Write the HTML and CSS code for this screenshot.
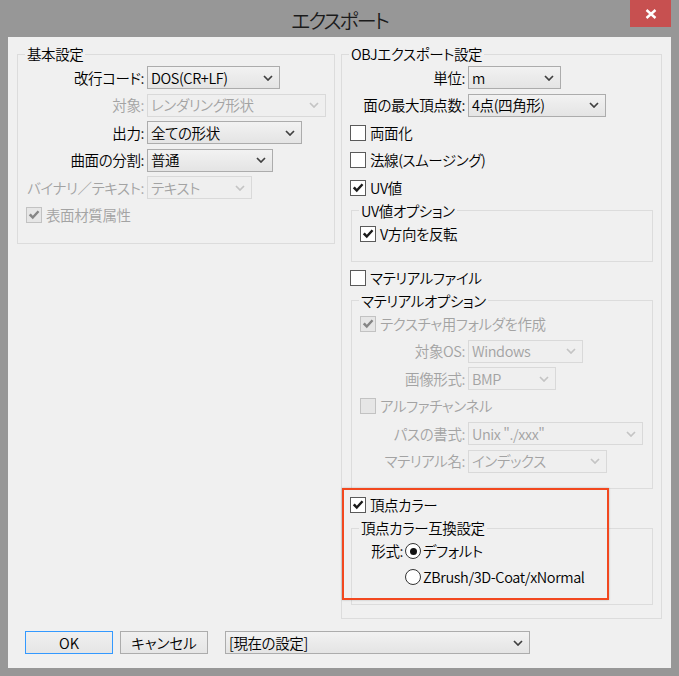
FILE: index.html
```html
<!DOCTYPE html>
<html lang="ja">
<head>
    <meta charset="UTF-8">
    <meta name="viewport" content="width=device-width, initial-scale=1.0">
    <title>エクスポート</title>
    <link rel="stylesheet" href="styles.css">
</head>
<body>
    <div class="window">
        <div class="titlebar">
            <div class="title">エクスポート</div>
            <button class="close-btn" type="button">
                <svg width="12" height="10" viewBox="0 0 12 10"><path d="M1.5 1l9 8M10.5 1l-9 8"/></svg>
            </button>
        </div>

        <div class="client">
            <div class="panes">
                <!-- 基本設定 -->
                <fieldset class="group basic">
                    <legend>基本設定</legend>
                    <div class="group-body">
                        <div class="field">
                            <span class="field-label">改行コード:</span>
                            <div class="combo w-133"><span>DOS(CR+LF)</span><svg class="chev" viewBox="0 0 10 6"><path d="M1 1l4 4 4-4"/></svg></div>
                        </div>
                        <div class="field disabled">
                            <span class="field-label">対象:</span>
                            <div class="combo w-179"><span>レンダリング形状</span><svg class="chev" viewBox="0 0 10 6"><path d="M1 1l4 4 4-4"/></svg></div>
                        </div>
                        <div class="field">
                            <span class="field-label">出力:</span>
                            <div class="combo w-155"><span>全ての形状</span><svg class="chev" viewBox="0 0 10 6"><path d="M1 1l4 4 4-4"/></svg></div>
                        </div>
                        <div class="field">
                            <span class="field-label">曲面の分割:</span>
                            <div class="combo w-126"><span>普通</span><svg class="chev" viewBox="0 0 10 6"><path d="M1 1l4 4 4-4"/></svg></div>
                        </div>
                        <div class="field disabled">
                            <span class="field-label">バイナリ／テキスト:</span>
                            <div class="combo w-105"><span>テキスト</span><svg class="chev" viewBox="0 0 10 6"><path d="M1 1l4 4 4-4"/></svg></div>
                        </div>
                        <div class="check checked disabled">
                            <span class="box"><svg viewBox="0 0 14 14"><path d="M1.8 7.2l2-1.6 2 2.2 4.8-5.4 1.8 1.5-6.6 7.4z"/></svg></span>表面材質属性
                        </div>
                    </div>
                </fieldset>

                <!-- OBJエクスポート設定 -->
                <fieldset class="group obj">
                    <legend>OBJエクスポート設定</legend>
                    <div class="group-body">
                        <div class="field">
                            <span class="field-label">単位:</span>
                            <div class="combo w-93"><span>m</span><svg class="chev" viewBox="0 0 10 6"><path d="M1 1l4 4 4-4"/></svg></div>
                        </div>
                        <div class="field">
                            <span class="field-label">面の最大頂点数:</span>
                            <div class="combo w-138"><span>4点(四角形)</span><svg class="chev" viewBox="0 0 10 6"><path d="M1 1l4 4 4-4"/></svg></div>
                        </div>
                        <div class="check"><span class="box"></span>両面化</div>
                        <div class="check"><span class="box"></span>法線(スムージング)</div>
                        <div class="check checked">
                            <span class="box"><svg viewBox="0 0 14 14"><path d="M1.8 7.2l2-1.6 2 2.2 4.8-5.4 1.8 1.5-6.6 7.4z"/></svg></span>UV値
                        </div>

                        <fieldset class="group subgroup">
                            <legend>UV値オプション</legend>
                            <div class="group-body">
                                <div class="check checked">
                                    <span class="box"><svg viewBox="0 0 14 14"><path d="M1.8 7.2l2-1.6 2 2.2 4.8-5.4 1.8 1.5-6.6 7.4z"/></svg></span>V方向を反転
                                </div>
                            </div>
                        </fieldset>

                        <div class="check"><span class="box"></span>マテリアルファイル</div>

                        <fieldset class="group subgroup">
                            <legend>マテリアルオプション</legend>
                            <div class="group-body">
                                <div class="check checked disabled">
                                    <span class="box"><svg viewBox="0 0 14 14"><path d="M1.8 7.2l2-1.6 2 2.2 4.8-5.4 1.8 1.5-6.6 7.4z"/></svg></span>テクスチャ用フォルダを作成
                                </div>
                                <div class="field disabled">
                                    <span class="field-label">対象OS:</span>
                                    <div class="combo w-115"><span>Windows</span><svg class="chev" viewBox="0 0 10 6"><path d="M1 1l4 4 4-4"/></svg></div>
                                </div>
                                <div class="field disabled">
                                    <span class="field-label">画像形式:</span>
                                    <div class="combo w-88"><span>BMP</span><svg class="chev" viewBox="0 0 10 6"><path d="M1 1l4 4 4-4"/></svg></div>
                                </div>
                                <div class="check disabled"><span class="box"></span>アルファチャンネル</div>
                                <div class="field disabled">
                                    <span class="field-label">パスの書式:</span>
                                    <div class="combo w-175"><span>Unix "./xxx"</span><svg class="chev" viewBox="0 0 10 6"><path d="M1 1l4 4 4-4"/></svg></div>
                                </div>
                                <div class="field disabled">
                                    <span class="field-label">マテリアル名:</span>
                                    <div class="combo w-139"><span>インデックス</span><svg class="chev" viewBox="0 0 10 6"><path d="M1 1l4 4 4-4"/></svg></div>
                                </div>
                            </div>
                        </fieldset>

                        <div class="highlight">
                            <div class="check checked">
                                <span class="box"><svg viewBox="0 0 14 14"><path d="M1.8 7.2l2-1.6 2 2.2 4.8-5.4 1.8 1.5-6.6 7.4z"/></svg></span>頂点カラー
                            </div>
                            <fieldset class="group subgroup">
                                <legend>頂点カラー互換設定</legend>
                                <div class="format-grid">
                                    <span class="format-label">形式:</span>
                                    <div class="radio checked"><span class="dot"></span>デフォルト</div>
                                    <span></span>
                                    <div class="radio"><span class="dot"></span>ZBrush/3D-Coat/xNormal</div>
                                </div>
                            </fieldset>
                        </div>
                    </div>
                </fieldset>
            </div>

            <div class="footer">
                <button class="btn default" type="button">OK</button>
                <button class="btn" type="button">キャンセル</button>
                <div class="combo preset"><span>[現在の設定]</span><svg class="chev" viewBox="0 0 10 6"><path d="M1 1l4 4 4-4"/></svg></div>
            </div>
        </div>
    </div>
</body>
</html>
```

FILE: styles.css
```css
body {
    margin: 0;
    font-family: "Noto Sans CJK JP", sans-serif;
    font-size: 14.5px;
    font-weight: 350;
    line-height: 18px;
    letter-spacing: -0.4px;
    color: #000;
    font-feature-settings: "palt";
}

.window {
    width: 679px;
    height: 676px;
    box-sizing: border-box;
    padding: 0 8px 8px;
    background: #979797;
    display: flex;
    flex-direction: column;
}

.titlebar {
    height: 37px;
    flex-shrink: 0;
    display: grid;
    grid-template-columns: 1fr auto 1fr;
    align-items: start;
}
.title {
    grid-column: 2;
    padding-top: 7px;
    line-height: 27px;
    font-size: 20px;
    letter-spacing: -2px;
    color: #1b1b1b;
}
.close-btn {
    grid-column: 3;
    justify-self: end;
    width: 41px;
    height: 27px;
    padding: 0;
    border: none;
    background: #c75050;
    display: flex;
    align-items: center;
    justify-content: center;
}
.close-btn path {
    stroke: #fff;
    stroke-width: 2.4;
}

.client {
    flex: 1;
    background: #f0f0f0;
    padding: 8px 9px 0;
    display: flex;
    flex-direction: column;
}
.panes {
    display: flex;
    gap: 6px;
    align-items: flex-start;
}

/* group boxes */
.group {
    margin: 0;
    min-width: 0;
    padding: 3px 8px 16px;
    border: 1px solid #dcdcdc;
    box-sizing: border-box;
}
.group legend {
    padding: 0 2px;
    margin-left: -1px;
    line-height: 18px;
    white-space: nowrap;
}
.basic {
    width: 318px;
}
.obj {
    width: 321px;
    padding-bottom: 13px;
}
.subgroup {
    margin: -2px 0 0 1px;
    padding: 2.5px 8px 15.5px;
}
.group-body {
    display: flex;
    flex-direction: column;
    gap: 4.5px;
}

/* label + combo rows */
.field {
    display: flex;
    align-items: center;
    height: 23px;
}
.field-label {
    flex-shrink: 0;
    margin-right: 3px;
    text-align: right;
    white-space: nowrap;
}
.basic .field-label {
    width: 118px;
}
.obj .field-label {
    width: 115px;
}
.subgroup .field-label {
    width: 105px;
}
.field.disabled .field-label {
    color: #a3a3a3;
}

.combo {
    height: 23px;
    box-sizing: border-box;
    border: 1px solid #acacac;
    background: linear-gradient(#f2f2f2, #e4e4e4);
    padding: 0 6px 0 3px;
    display: flex;
    align-items: center;
    justify-content: space-between;
    white-space: nowrap;
}
.chev {
    width: 10px;
    height: 6px;
    flex-shrink: 0;
}
.chev path {
    fill: none;
    stroke: #404040;
    stroke-width: 1.7;
}
.disabled .combo {
    border-color: #d9d9d9;
    background: #efefef;
    color: #a3a3a3;
}
.disabled .chev path {
    stroke: #c4c4c4;
}

.w-88 { width: 88px; }
.w-93 { width: 93px; }
.w-105 { width: 105px; }
.w-115 { width: 115px; }
.w-126 { width: 126px; }
.w-133 { width: 133px; }
.w-138 { width: 138px; }
.w-139 { width: 139px; }
.w-155 { width: 155px; }
.w-175 { width: 175px; }
.w-179 { width: 179px; }

/* checkboxes */
.check {
    display: flex;
    align-items: center;
    gap: 4px;
    height: 23px;
    white-space: nowrap;
}
.box {
    width: 16px;
    height: 16px;
    box-sizing: border-box;
    border: 1px solid #5a5a5a;
    background: #fff;
    display: flex;
    align-items: center;
    justify-content: center;
}
.box svg {
    width: 14px;
    height: 14px;
    fill: #1a1a1a;
}
.check.disabled {
    color: #a3a3a3;
}
.check.disabled .box {
    border-color: #c2c2c2;
    background: #e6e6e6;
}
.check.disabled .box svg {
    fill: #858585;
}

/* vertex colour block */
.highlight {
    position: relative;
    display: flex;
    flex-direction: column;
    gap: 4.5px;
}
.highlight::after {
    content: "";
    position: absolute;
    left: -8px;
    top: -5.5px;
    right: 44px;
    bottom: 5px;
    border: 2.5px solid #f2481f;
    box-shadow: 0 0 2px rgba(0, 0, 0, 0.25);
    pointer-events: none;
}
.format-grid {
    display: grid;
    grid-template-columns: 43px auto;
    column-gap: 2px;
    row-gap: 3px;
    justify-content: start;
}
.format-label {
    text-align: right;
    align-self: center;
}
.radio {
    display: flex;
    align-items: center;
    gap: 2px;
    height: 23px;
    white-space: nowrap;
}
.dot {
    width: 16px;
    height: 16px;
    box-sizing: border-box;
    border: 1px solid #333;
    border-radius: 50%;
    background: #fff;
    display: flex;
    align-items: center;
    justify-content: center;
}
.radio.checked .dot::after {
    content: "";
    width: 7px;
    height: 7px;
    border-radius: 50%;
    background: #111;
}

/* bottom buttons */
.footer {
    display: flex;
    gap: 7px;
    margin-top: 12px;
    padding-left: 8px;
}
.btn {
    width: 88px;
    height: 23px;
    padding: 0;
    box-sizing: border-box;
    border: 1px solid #acacac;
    background: linear-gradient(#f0f0f0, #e5e5e5);
    font: inherit;
    color: #000;
}
.btn.default {
    border-color: #3399ff;
}
.preset {
    width: 305px;
    margin-left: 10px;
}
```
